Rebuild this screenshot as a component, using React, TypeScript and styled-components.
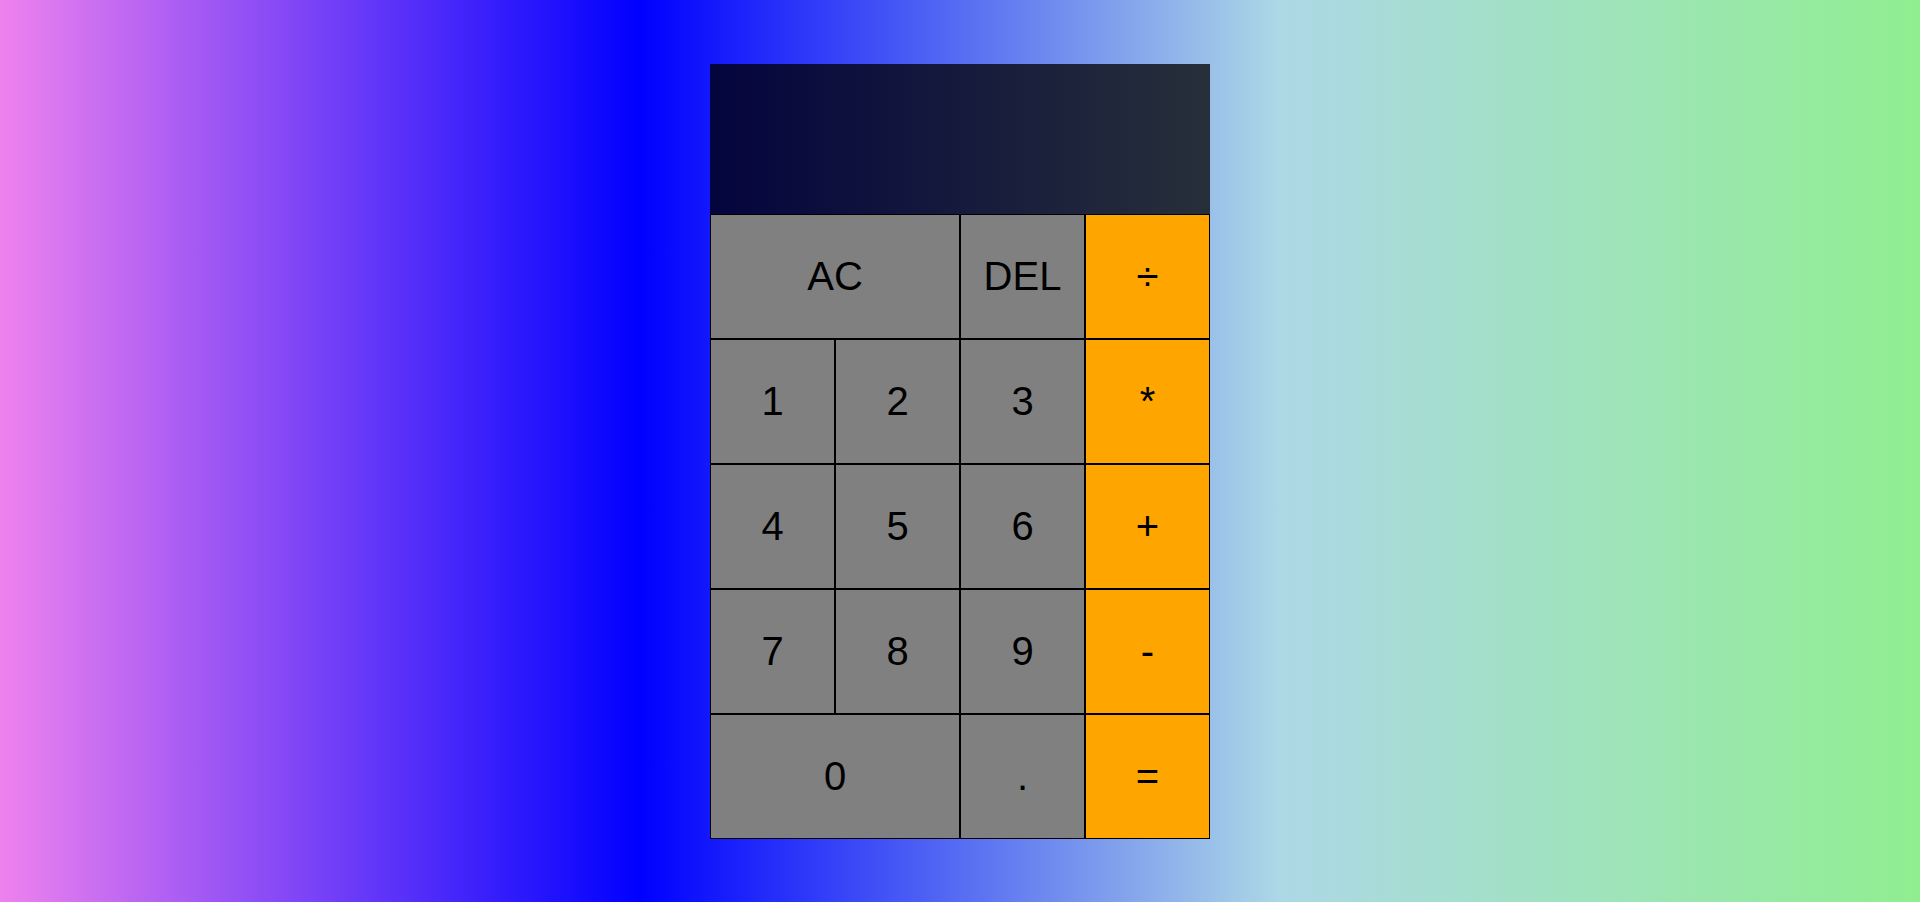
import React from "react";
import styled, { createGlobalStyle } from "styled-components";

const GlobalStyle = createGlobalStyle`
  *, *::before, *::after { box-sizing: border-box; }
  html, body {
    margin: 0;
    padding: 0;
  }
  body {
    min-height: 100vh;
    background: linear-gradient(to right, violet, blue, lightblue, lightgreen);
    font-family: "Liberation Sans", Arial, sans-serif;
  }
`;

const Page = styled.main`
  min-height: 100vh;
  display: flex;
  justify-content: center;
  align-items: flex-start;
  padding-top: 64px;
`;

const Calculator = styled.div`
  display: grid;
  grid-template-columns: repeat(4, 125px);
  grid-template-rows: 150px repeat(5, 125px);
`;

const Output = styled.div`
  grid-column: 1 / -1;
  background: linear-gradient(to right, #04043e, #272f3a);
  display: flex;
  flex-direction: column;
  align-items: flex-end;
  justify-content: space-around;
  padding: 10px;
  word-wrap: break-word;
  word-break: break-all;
`;

const Previous = styled.div`
  color: rgba(255, 255, 255, 0.75);
  font-size: 24px;
`;

const Current = styled.div`
  color: white;
  font-size: 40px;
`;

const Key = styled.button<{ $span?: number; $op?: boolean }>`
  grid-column: span ${(p) => p.$span ?? 1};
  border: 1px solid #000;
  margin: 0;
  padding: 0;
  outline: none;
  cursor: pointer;
  font-family: "Liberation Sans", Arial, sans-serif;
  font-size: 40px;
  color: #000;
  background-color: ${(p) => (p.$op ? "orange" : "gray")};
  display: flex;
  align-items: center;
  justify-content: center;
`;

export default function App() {
  return (
    <>
      <GlobalStyle />
      <Page>
        <Calculator>
          <Output>
            <Previous></Previous>
            <Current></Current>
          </Output>
          <Key $span={2}>AC</Key>
          <Key>DEL</Key>
          <Key $op>÷</Key>
          <Key>1</Key>
          <Key>2</Key>
          <Key>3</Key>
          <Key $op>*</Key>
          <Key>4</Key>
          <Key>5</Key>
          <Key>6</Key>
          <Key $op>+</Key>
          <Key>7</Key>
          <Key>8</Key>
          <Key>9</Key>
          <Key $op>-</Key>
          <Key $span={2}>0</Key>
          <Key>.</Key>
          <Key $op>=</Key>
        </Calculator>
      </Page>
    </>
  );
}
